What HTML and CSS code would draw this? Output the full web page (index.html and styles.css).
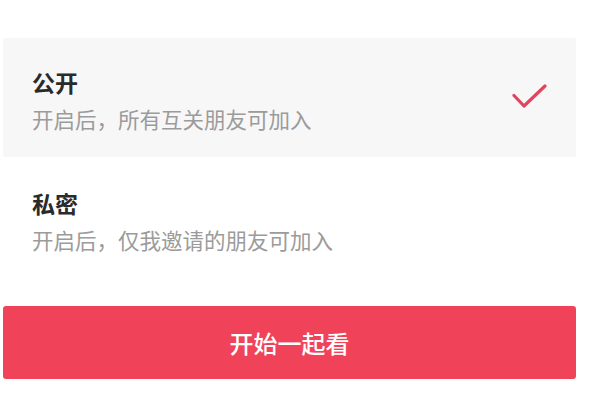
FILE: index.html
```html
<!DOCTYPE html>
<html lang="zh-CN">
<head>
<meta charset="utf-8">
<link rel="stylesheet" href="styles.css">
</head>
<body>
<div class="page">
  <div class="options">
    <div class="option selected">
      <div class="text">
        <div class="title">公开</div>
        <div class="desc">开启后，所有互关朋友可加入</div>
      </div>
      <svg class="check" width="36" height="28" viewBox="0 0 36 28">
        <path d="M2 12.5 L12 23 L33 3" fill="none" stroke="#e0455e" stroke-width="3.2" stroke-linecap="round" stroke-linejoin="round"/>
      </svg>
    </div>
    <div class="option">
      <div class="text">
        <div class="title">私密</div>
        <div class="desc">开启后，仅我邀请的朋友可加入</div>
      </div>
    </div>
  </div>
  <button class="start">开始一起看</button>
</div>
</body>
</html>
```

FILE: styles.css
```css
html, body {
  margin: 0;
  padding: 0;
  background: #ffffff;
}
.page {
  padding: 38px 24px 0 3px;
  font-family: "Noto Sans CJK SC", "Noto Sans", sans-serif;
}
.options {
  display: flex;
  flex-direction: column;
  gap: 2px;
}
.option {
  display: flex;
  align-items: flex-start;
  justify-content: space-between;
  height: 119px;
  box-sizing: border-box;
  padding: 28px 28px 0 29px;
  border-radius: 2px;
}
.option.selected {
  background: #f7f7f7;
}
.text {
  display: flex;
  flex-direction: column;
  gap: 5px;
}
.title {
  font-size: 23px;
  line-height: 32px;
  font-weight: 700;
  color: #2a2a2a;
}
.desc {
  font-size: 21.5px;
  line-height: 32px;
  color: #9b9b9b;
}
.check {
  display: block;
  align-self: center;
  margin-top: -30px;
}
.start {
  display: block;
  width: 100%;
  height: 73px;
  margin-top: 28px;
  border: none;
  border-radius: 3px;
  background: #f0435a;
  color: #ffffff;
  font-family: "Noto Sans CJK SC", "Noto Sans", sans-serif;
  font-size: 24px;
  font-weight: 500;
  padding: 0;
}
```
